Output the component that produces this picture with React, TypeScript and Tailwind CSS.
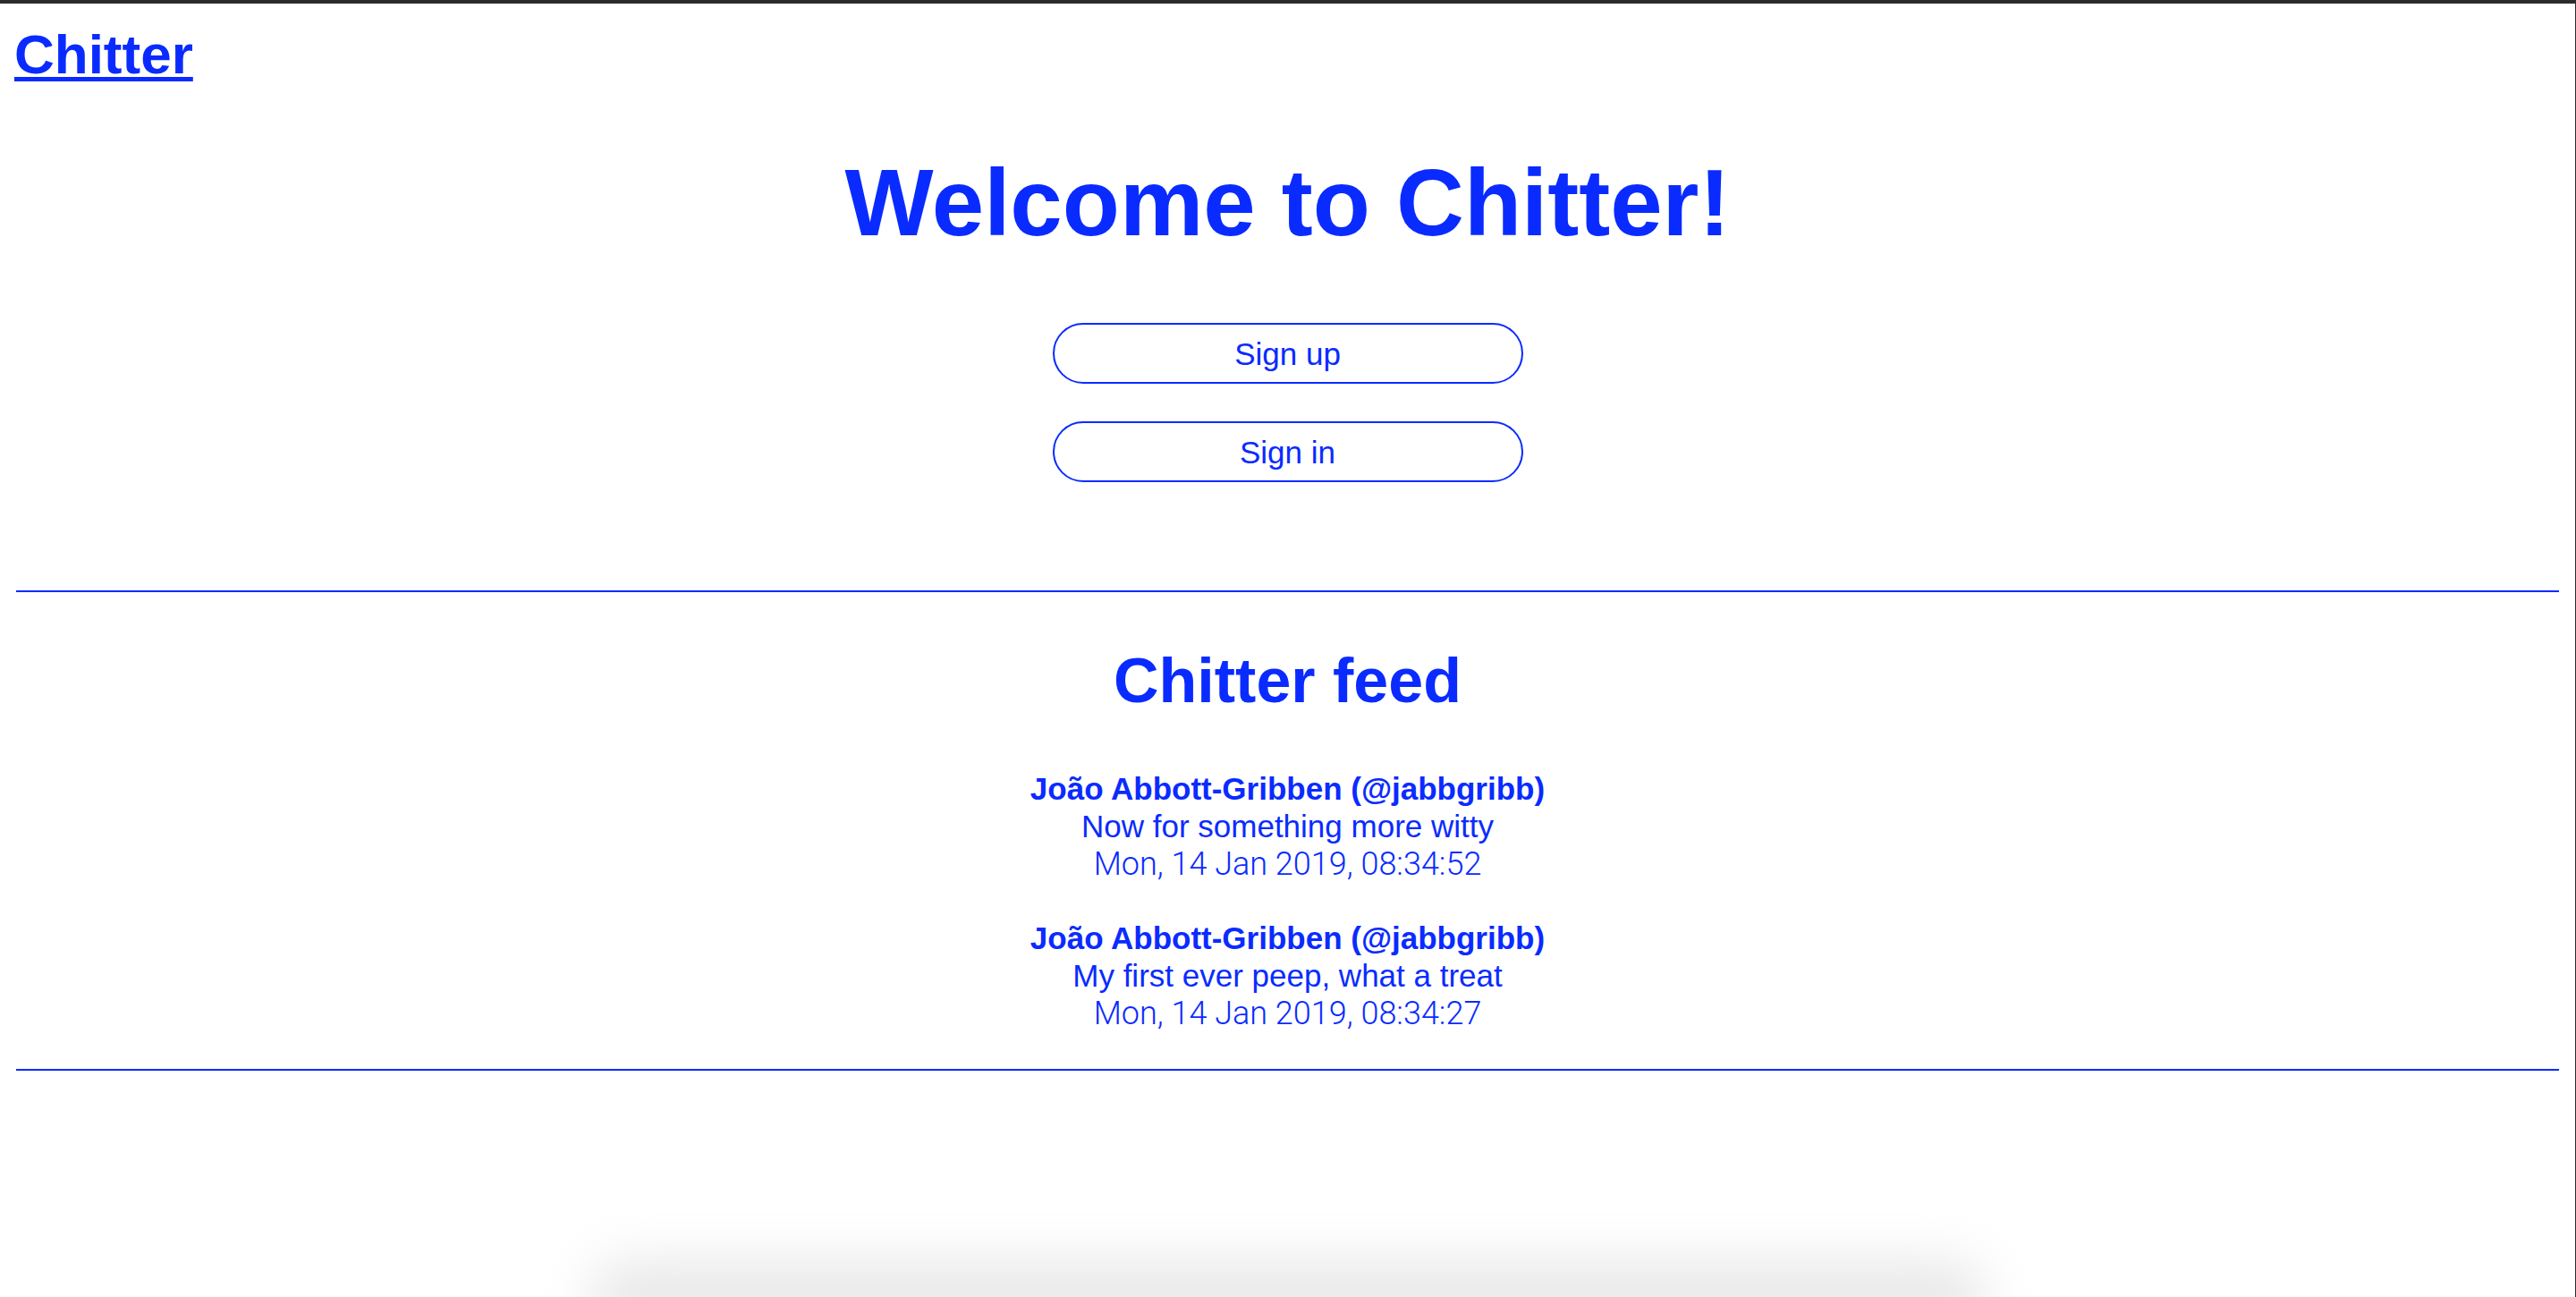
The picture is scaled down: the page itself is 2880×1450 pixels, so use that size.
import React from "react";

type Peep = {
  name: string;
  handle: string;
  body: string;
  time: string;
};

const peeps: Peep[] = [
  {
    name: "João Abbott-Gribben",
    handle: "jabbgribb",
    body: "Now for something more witty",
    time: "Mon, 14 Jan 2019, 08:34:52",
  },
  {
    name: "João Abbott-Gribben",
    handle: "jabbgribb",
    body: "My first ever peep, what a treat",
    time: "Mon, 14 Jan 2019, 08:34:27",
  },
];

export default function App() {
  return (
    <div className="relative flex h-[1450px] flex-col overflow-hidden border-t-4 border-r border-[#2b2b2b] bg-white font-['Liberation_Sans',Arial,sans-serif] text-[#0a2bff]">
      {/* ===== HEADER ===== */}
      <header className="pl-[16px] pt-[20px]">
        <h1 className="text-[62px] font-bold leading-[74px]">
          <a
            href="#"
            className="underline decoration-[5px] underline-offset-[4px]"
          >
            Chitter
          </a>
        </h1>
      </header>

      {/* ===== WELCOME ===== */}
      <h2 className="mt-[68px] text-center text-[105px] font-bold leading-[122px]">
        Welcome to Chitter!
      </h2>

      <div className="mt-[73px] flex flex-col items-center gap-[42px]">
        <button className="h-[68px] w-[526px] rounded-full border-2 border-[#0a2bff] text-[35px] leading-none">
          Sign up
        </button>
        <button className="h-[68px] w-[526px] rounded-full border-2 border-[#0a2bff] text-[35px] leading-none">
          Sign in
        </button>
      </div>

      <div className="mx-[18px] mt-[121px] h-[2px] bg-[#0a2bff]" />

      {/* ===== FEED ===== */}
      <section className="mt-[58px] flex flex-col items-center">
        <h2 className="text-[70px] font-bold leading-[83px]">Chitter feed</h2>

        <ul className="mt-[58px] flex flex-col items-center gap-[41px] text-center text-[35px] leading-[42px]">
          {peeps.map((p, i) => (
            <li key={i} className="flex flex-col items-center">
              <span className="font-bold">
                {p.name} (@{p.handle})
              </span>
              <span>{p.body}</span>
              <span className="font-['Roboto',sans-serif] text-[36px] font-light">
                {p.time}
              </span>
            </li>
          ))}
        </ul>
      </section>

      <div className="mx-[18px] mt-[41px] h-[2px] bg-[#0a2bff]" />

      {/* dock shadow at the bottom of the screen */}
      <div className="mx-auto mt-auto h-[90px] w-[1560px] translate-y-[48px] rounded-[40px] bg-[#e9e9e9] blur-[28px]" />
    </div>
  );
}
